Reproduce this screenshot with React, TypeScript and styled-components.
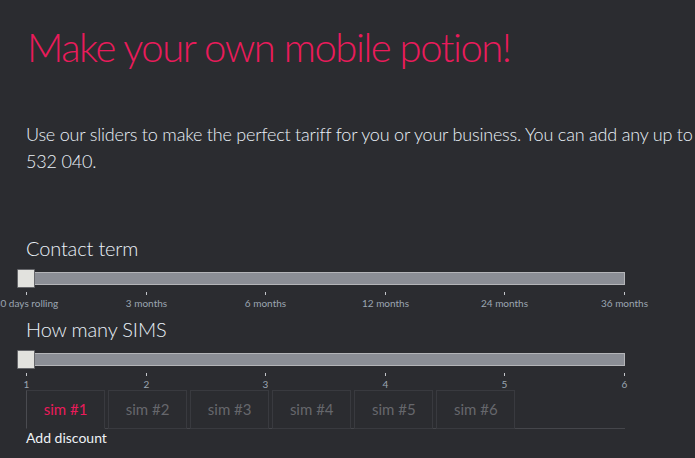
import React from 'react';
import styled, { createGlobalStyle } from 'styled-components';

const GlobalStyle = createGlobalStyle`
  html, body {
    margin: 0;
    padding: 0;
    background: #2b2c30;
    overflow: hidden;
  }
  body {
    font-family: 'Lato', 'Open Sans', sans-serif;
    color: #e3ebf3;
  }
`;

const Page = styled.div`
  padding: 23px 0 0 26px;
  width: 1000px;
`;

const Title = styled.h1`
  font-family: 'Lato', sans-serif;
  font-weight: 300;
  font-size: 40px;
  line-height: 48px;
  letter-spacing: -1.45px;
  color: #ea1b5b;
  margin: 0 0 0 1px;
`;

const Intro = styled.p`
  font-weight: 300;
  font-size: 18px;
  line-height: 27px;
  letter-spacing: -0.2px;
  white-space: nowrap;
  color: #eaf1f8;
  margin: 50px 0 0;
`;

const SectionLabel = styled.h3<{ $top: number }>`
  font-weight: 300;
  font-size: 20px;
  line-height: 24px;
  letter-spacing: -0.15px;
  color: #eaf1f8;
  margin: ${(p) => p.$top}px 0 0;
`;

const SliderBox = styled.div`
  width: 599px;
`;

const Rail = styled.div`
  position: relative;
  height: 19px;
  margin-top: 9px;
  display: flex;
  align-items: center;
`;

const Track = styled.div`
  flex: 1;
  height: 11px;
  background: #8b8e95;
  border: 1px solid #b4b5b8;
`;

const Handle = styled.div`
  position: absolute;
  left: -9px;
  top: 0;
  width: 16px;
  height: 17px;
  background: #e2e2de;
  border: 1px solid #66676b;
  border-radius: 1px;
`;

const Scale = styled.div`
  position: relative;
  height: 21px;
`;

const Tick = styled.span`
  position: absolute;
  top: 4px;
  width: 1px;
  height: 3px;
  background: #c4c6ca;
`;

const TickLabel = styled.span`
  position: absolute;
  top: 9px;
  transform: translateX(-50%);
  font-size: 10px;
  line-height: 12px;
  white-space: nowrap;
  color: #9ba6b2;
`;

const Tabs = styled.ul`
  list-style: none;
  margin: 0;
  padding: 0;
  width: 599px;
  display: flex;
  border-bottom: 1px solid #45464b;
`;

const Tab = styled.li<{ $active?: boolean }>`
  margin: 0 3px -1px 0;
  padding: 8px 16.7px 9px;
  font-size: 15px;
  line-height: 20px;
  border: 1px solid #393a3f;
  border-bottom-color: ${(p) => (p.$active ? '#2b2c30' : '#393a3f')};
  border-left-color: ${(p) => (p.$active ? '#4a4b50' : '#393a3f')};
  color: ${(p) => (p.$active ? '#ea1b5b' : '#66676c')};
  background: #2b2c30;
`;

const Discount = styled.div`
  font-size: 14px;
  line-height: 17px;
  color: #eef2f6;
`;

interface SliderProps {
  labels: string[];
}

const Slider: React.FC<SliderProps> = ({ labels }) => {
  const step = 598 / (labels.length - 1);
  return (
    <SliderBox>
      <Rail>
        <Track />
        <Handle />
      </Rail>
      <Scale>
        {labels.map((l, i) => (
          <React.Fragment key={l}>
            <Tick style={{ left: Math.round(i * step) }} />
            <TickLabel style={{ left: Math.round(i * step) + 0.5 }}>{l}</TickLabel>
          </React.Fragment>
        ))}
      </Scale>
    </SliderBox>
  );
};

const terms = ['30 days rolling', '3 months', '6 months', '12 months', '24 months', '36 months'];
const sims = ['1', '2', '3', '4', '5', '6'];

export default function App() {
  return (
    <>
      <GlobalStyle />
      <Page>
        <Title>Make your own mobile potion!</Title>
        <Intro>
          Use our sliders to make the perfect tariff for you or your business. You can add any up to 6 SIMs, for more call us on 0330 088
          <br />
          532 040.
        </Intro>
        <SectionLabel $top={61}>Contact term</SectionLabel>
        <Slider labels={terms} />
        <SectionLabel $top={8}>How many SIMS</SectionLabel>
        <Slider labels={sims} />
        <Tabs>
          {sims.map((n, i) => (
            <Tab key={n} $active={i === 0}>
              sim #{n}
            </Tab>
          ))}
        </Tabs>
        <Discount>Add discount</Discount>
      </Page>
    </>
  );
}
